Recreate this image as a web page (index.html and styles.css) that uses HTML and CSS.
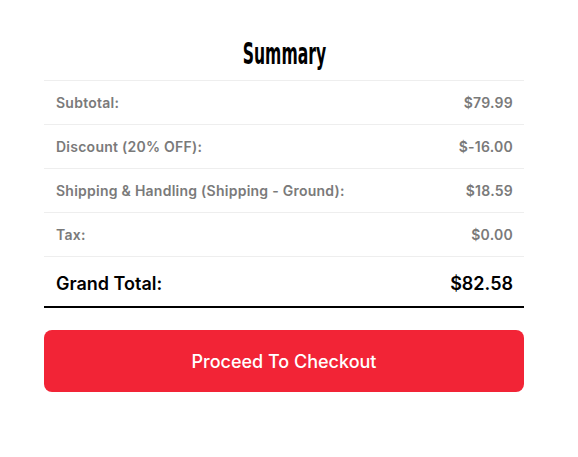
FILE: index.html
```html
<!DOCTYPE html>
<html lang="en">
<head>
    <meta charset="UTF-8">
    <meta name="viewport" content="width=device-width, initial-scale=1.0">
    <title>Order Summary</title>
    <link rel="stylesheet" href="styles.css">
</head>
<body>

    <main class="summary">
        <h2 class="summary-title"><span>Summary</span></h2>

        <div class="summary-rows">
            <div class="row">
                <span>Subtotal:</span>
                <span>$79.99</span>
            </div>
            <div class="row">
                <span>Discount (20% OFF):</span>
                <span>$-16.00</span>
            </div>
            <div class="row">
                <span>Shipping &amp; Handling (Shipping - Ground):</span>
                <span>$18.59</span>
            </div>
            <div class="row">
                <span>Tax:</span>
                <span>$0.00</span>
            </div>
            <div class="row total">
                <span>Grand Total:</span>
                <span>$82.58</span>
            </div>
        </div>

        <button class="checkout-btn">Proceed To Checkout</button>
    </main>

</body>
</html>
```

FILE: styles.css
```css
/* General Styles */
body {
    margin: 0;
    background: #fff;
    font-family: Inter, "Liberation Sans", Arial, sans-serif;
}

.summary {
    width: 480px;
    margin: 0 0 0 44px;
    padding-top: 30px;
}

/* Title */
.summary-title {
    margin: 0;
    height: 50px;
    text-align: center;
    font-family: "DejaVu Sans Condensed", sans-serif;
    font-size: 31px;
    font-weight: bold;
    line-height: 46px;
    color: #000;
}

.summary-title span {
    display: inline-block;
    transform: scaleX(0.56);
}

/* Rows */
.summary-rows {
    border-top: 1px solid #eee;
}

.row {
    display: flex;
    justify-content: space-between;
    align-items: center;
    height: 43px;
    padding: 0 11px 0 12px;
    border-bottom: 1px solid #eee;
    font-size: 14px;
    font-weight: 600;
    letter-spacing: 0.25px;
    color: #7a7a7a;
}

.row.total {
    box-sizing: border-box;
    height: 51px;
    padding-top: 3px;
    border-bottom: 2px solid #000;
    font-size: 18px;
    font-weight: 600;
    letter-spacing: 0;
    color: #000;
}

/* Button */
.checkout-btn {
    display: block;
    width: 100%;
    height: 62px;
    margin-top: 22px;
    border: none;
    border-radius: 8px;
    background: #f22436;
    color: #fff;
    font-family: inherit;
    font-size: 18px;
    font-weight: 500;
    cursor: pointer;
}

.checkout-btn:hover {
    background: #d81c2d;
}
```
